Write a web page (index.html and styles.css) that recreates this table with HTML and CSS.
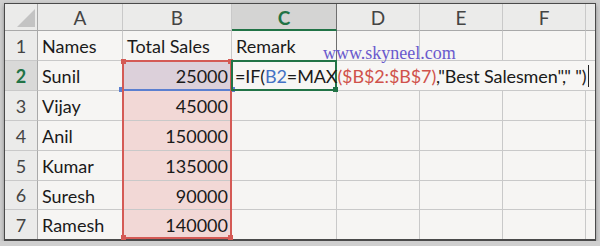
FILE: index.html
```html
<!DOCTYPE html>
<html lang="en">
    <head>
        <meta charset="UTF-8" />
        <meta name="viewport" content="width=device-width, initial-scale=1.0" />
        <title>Best Salesmen - IF and MAX</title>

        <link rel="stylesheet" href="styles.css">
    </head>
    <body>
        <div class="sheet">
            <!-- column headers -->
            <div class="corner"><span></span></div>
            <div class="col-head">A</div>
            <div class="col-head">B</div>
            <div class="col-head selected">C</div>
            <div class="col-head">D</div>
            <div class="col-head">E</div>
            <div class="col-head">F</div>
            <div class="col-head tail"></div>

            <!-- row 1 -->
            <div class="row-head">1</div>
            <div class="cell">Names</div>
            <div class="cell">Total Sales</div>
            <div class="cell above-edit">Remark</div>
            <div class="cell"></div>
            <div class="cell"></div>
            <div class="cell"></div>
            <div class="cell tail"></div>

            <!-- row 2, C2 is being edited -->
            <div class="row-head selected">2</div>
            <div class="cell">Sunil</div>
            <div class="cell num in-range first">25000</div>
            <div class="cell editing">
                <span class="formula">=IF(<span class="ref-blue">B2</span>=MAX<span class="ref-red">($B$2:$B$7)</span>,"Best Salesmen"," ")</span>
            </div>

            <!-- row 3 -->
            <div class="row-head">3</div>
            <div class="cell">Vijay</div>
            <div class="cell num in-range">45000</div>
            <div class="cell"></div>
            <div class="cell"></div>
            <div class="cell"></div>
            <div class="cell"></div>
            <div class="cell tail"></div>

            <!-- row 4 -->
            <div class="row-head">4</div>
            <div class="cell">Anil</div>
            <div class="cell num in-range">150000</div>
            <div class="cell"></div>
            <div class="cell"></div>
            <div class="cell"></div>
            <div class="cell"></div>
            <div class="cell tail"></div>

            <!-- row 5 -->
            <div class="row-head">5</div>
            <div class="cell">Kumar</div>
            <div class="cell num in-range">135000</div>
            <div class="cell"></div>
            <div class="cell"></div>
            <div class="cell"></div>
            <div class="cell"></div>
            <div class="cell tail"></div>

            <!-- row 6 -->
            <div class="row-head">6</div>
            <div class="cell">Suresh</div>
            <div class="cell num in-range">90000</div>
            <div class="cell"></div>
            <div class="cell"></div>
            <div class="cell"></div>
            <div class="cell"></div>
            <div class="cell tail"></div>

            <!-- row 7 -->
            <div class="row-head last">7</div>
            <div class="cell last">Ramesh</div>
            <div class="cell num in-range last">140000</div>
            <div class="cell last"></div>
            <div class="cell last"></div>
            <div class="cell last"></div>
            <div class="cell last"></div>
            <div class="cell tail last"></div>

            <!-- reference highlights drawn over the grid -->
            <div class="hl hl-blue">
                <i class="handle bl"></i><i class="handle br"></i>
            </div>
            <div class="hl hl-red">
                <i class="handle tl"></i><i class="handle tr"></i>
                <i class="handle bl"></i><i class="handle br"></i>
            </div>
            <div class="hl hl-active">
                <i class="handle br"></i>
            </div>

            <div class="watermark">www.skyneel.com</div>
        </div>
    </body>
</html>
```

FILE: styles.css
```css
* {
    box-sizing: border-box;
}
body {
    margin: 0;
    padding: 3px 4px 0;
    background-color: #cfcfcf;
    font-family: "Lato", "Open Sans", sans-serif;
    font-size: 18px;
    color: #1a1a1a;
}

.sheet {
    position: relative;
    width: 592px;
    display: grid;
    grid-template-columns: 33px 85px 109px 105px 83px 83px 83px 9px;
    grid-template-rows: 27px 30px 30px 30px 30px 30px 29px 29px;
    background-color: #f6f5f3;
    border: 1px solid #4a4a4a;
    border-bottom-width: 2px;
    box-shadow: 0 2px 4px rgba(0, 0, 0, 0.35);
}

.cell,
.col-head,
.row-head,
.corner {
    border-right: 1px solid #c9c9c9;
    border-bottom: 1px solid #c9c9c9;
    display: flex;
    align-items: center;
    white-space: nowrap;
    overflow: hidden;
}

.tail {
    border-right: 0;
}
.last {
    border-bottom: 0;
}

/* headers */
.col-head,
.row-head,
.corner {
    background-color: #ebebea;
    color: #444;
    justify-content: center;
}
.col-head {
    border-bottom-color: #a9a9a9;
    padding-top: 1px;
    font-size: 19px;
}
.row-head {
    border-right-color: #a9a9a9;
}
.corner {
    border-right-color: #a9a9a9;
    border-bottom-color: #a9a9a9;
    position: relative;
}
.corner span {
    position: absolute;
    right: 2px;
    bottom: 3px;
    width: 0;
    height: 0;
    border-left: 18px solid transparent;
    border-bottom: 18px solid #c3c3c3;
}

.col-head.selected {
    background-color: #d4d4d3;
    color: #217346;
    font-weight: bold;
    border-bottom: 2px solid #217346;
    border-right-color: #6f6f6f;
}
.row-head.selected {
    background-color: #d9d9d8;
    color: #217346;
    font-weight: bold;
}

/* cells */
.cell {
    padding: 1px 4px 0;
}
.cell.num {
    justify-content: flex-end;
    padding-right: 3px;
}
.cell.above-edit {
    border-right-color: #6f6f6f;
}
.in-range {
    background-color: #f2d8d6;
}
.in-range.first {
    background-color: #dcd0da;
}

.editing {
    grid-column: 4 / 9;
    border-right: 0;
    padding-left: 3px;
    background-color: #f7f6f4;
    overflow: visible;
}
.formula {
    position: relative;
    z-index: 1;
    border-right: 1px solid #222;
    padding-right: 1px;
    letter-spacing: -0.12px;
}
.ref-blue {
    color: #4472c4;
}
.ref-red {
    color: #d0524b;
}

/* formula reference outlines, laid over their grid areas */
.hl {
    position: absolute;
    top: -1px;
    left: -1px;
    right: 0;
    bottom: 0;
    pointer-events: none;
}
.hl-blue {
    grid-area: 3 / 3 / 4 / 4;
    border-bottom: 2px solid #5b7fd0;
}
.hl-red {
    grid-area: 3 / 3 / 9 / 4;
    border: 2px solid #d45a55;
}
.hl-active {
    grid-area: 3 / 4 / 4 / 5;
    border: 2px solid #217346;
}

.handle {
    position: absolute;
    width: 5px;
    height: 5px;
}
.hl-blue .handle {
    background-color: #5b7fd0;
}
.hl-red .handle {
    background-color: #d45a55;
}
.hl-active .handle {
    background-color: #217346;
}
.handle.tl { top: -3px; left: -3px; }
.handle.tr { top: -3px; right: -3px; }
.handle.bl { bottom: -3px; left: -3px; }
.handle.br { bottom: -3px; right: -3px; }

.watermark {
    position: absolute;
    left: 318px;
    top: 40px;
    font-family: "Liberation Serif", serif;
    font-size: 18px;
    line-height: 1;
    color: #6a5acd;
}
```
